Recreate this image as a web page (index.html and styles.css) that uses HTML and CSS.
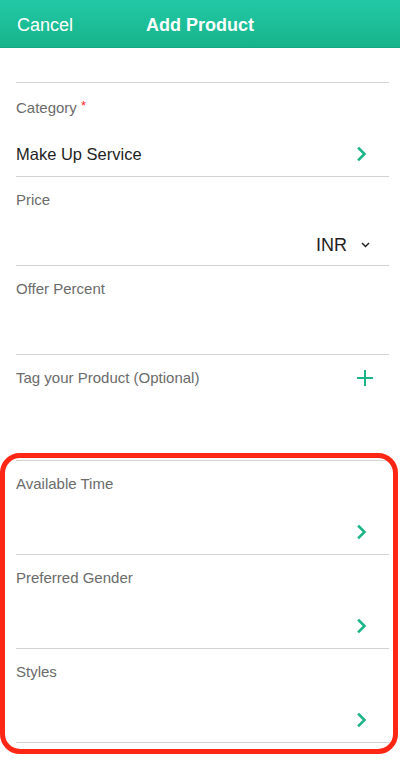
FILE: index.html
```html
<!DOCTYPE html>
<html>
<head>
<meta charset="utf-8">
<link rel="stylesheet" href="styles.css">
</head>
<body>
<header class="topbar">
  <span class="cancel">Cancel</span>
  <span class="title">Add Product</span>
  <span></span>
</header>
<main class="form">
  <div class="field field-blank"></div>

  <div class="field field-lg">
    <div class="label">Category <span class="req">*</span></div>
    <div class="row row-value">
      <span class="value">Make Up Service</span>
      <svg class="chev" width="10" height="16" viewBox="0 0 10 16"><path d="M2 2.5 L7.5 8 L2 13.5" fill="none" stroke="#1db489" stroke-width="2.6" stroke-linecap="square"/></svg>
    </div>
  </div>

  <div class="field field-md">
    <div class="label">Price</div>
    <div class="row row-price">
      <span class="currency">INR</span>
      <svg class="down" width="9" height="6" viewBox="0 0 9 6"><path d="M1 1 L4.5 4.5 L8 1" fill="none" stroke="#222" stroke-width="1.5"/></svg>
    </div>
  </div>

  <div class="field field-md">
    <div class="label">Offer Percent</div>
  </div>

  <div class="field field-tag">
    <div class="row row-tag">
      <span class="label">Tag your Product (Optional)</span>
      <svg class="plus" width="16" height="16" viewBox="0 0 16 16"><path d="M8 0 V16 M0 8 H16" stroke="#1db489" stroke-width="2"/></svg>
    </div>
  </div>

  <div class="field field-lg">
    <div class="label">Available Time</div>
    <div class="row row-end">
      <svg class="chev" width="10" height="16" viewBox="0 0 10 16"><path d="M2 2.5 L7.5 8 L2 13.5" fill="none" stroke="#1db489" stroke-width="2.6" stroke-linecap="square"/></svg>
    </div>
  </div>

  <div class="field field-lg">
    <div class="label">Preferred Gender</div>
    <div class="row row-end">
      <svg class="chev" width="10" height="16" viewBox="0 0 10 16"><path d="M2 2.5 L7.5 8 L2 13.5" fill="none" stroke="#1db489" stroke-width="2.6" stroke-linecap="square"/></svg>
    </div>
  </div>

  <div class="field field-lg">
    <div class="label">Styles</div>
    <div class="row row-end">
      <svg class="chev" width="10" height="16" viewBox="0 0 10 16"><path d="M2 2.5 L7.5 8 L2 13.5" fill="none" stroke="#1db489" stroke-width="2.6" stroke-linecap="square"/></svg>
    </div>
  </div>
</main>
<div class="highlight"></div>
</body>
</html>
```

FILE: styles.css
```css
html, body {
  margin: 0;
  padding: 0;
  background: #ffffff;
  font-family: "Liberation Sans", Arial, sans-serif;
}

.topbar {
  height: 48px;
  box-sizing: border-box;
  display: grid;
  grid-template-columns: 1fr auto 1fr;
  align-items: center;
  padding: 3px 17px 0 17px;
  background: linear-gradient(#22c9a6, #17b48b);
  border-bottom: 1px solid #14a884;
  color: #ffffff;
}

.cancel {
  font-size: 18px;
}

.title {
  font-size: 18px;
  font-weight: bold;
}

.form {
  padding: 0 11px 0 16px;
}

.field {
  box-sizing: border-box;
  border-bottom: 1px solid #d2d2d2;
  display: flex;
  flex-direction: column;
}

.field-blank {
  height: 35px;
}

.field-lg {
  height: 94px;
  padding-top: 13px;
}

.field-md {
  height: 89px;
  padding-top: 13px;
}

.field-tag {
  height: 106px;
  padding-top: 13px;
}

.label {
  font-size: 15px;
  line-height: 20px;
  color: #6b6b6b;
}

.req {
  color: #ff2a2a;
  font-size: 13px;
  vertical-align: 3px;
}

.row {
  display: flex;
  align-items: center;
  height: 30px;
}

.row-value {
  margin-top: 21px;
  justify-content: space-between;
  padding-right: 22px;
}

.row-end {
  margin-top: 23px;
  justify-content: flex-end;
  padding-right: 22px;
}

.row-price {
  margin-top: 20px;
  justify-content: flex-end;
  padding-right: 19px;
  gap: 14px;
}

.row-tag {
  height: 20px;
  justify-content: space-between;
  padding-right: 16px;
}

.value {
  font-size: 16.5px;
  color: #1e1e1e;
}

.currency {
  font-size: 18px;
  color: #1e1e1e;
}

.chev, .down, .plus {
  display: block;
}

.highlight {
  position: absolute;
  left: 0;
  top: 453px;
  width: 398px;
  height: 301px;
  box-sizing: border-box;
  border: 5px solid #fe2614;
  border-radius: 20px;
  pointer-events: none;
}
```
